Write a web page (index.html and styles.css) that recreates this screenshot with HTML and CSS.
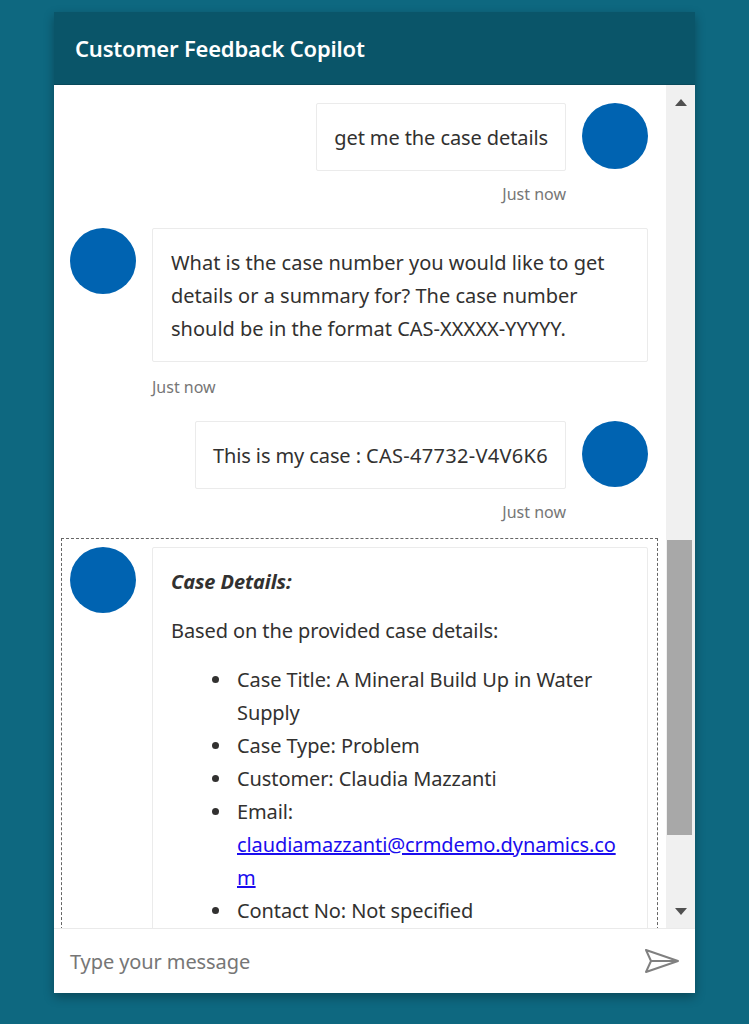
FILE: index.html
```html
<!DOCTYPE html>
<html lang="en">
<head>
    <meta charset="UTF-8">
    <title>Customer Feedback Copilot</title>
    <link rel="stylesheet" href="styles.css">
</head>
<body>
<div class="chat">
    <div class="chat-header">Customer Feedback Copilot</div>
    <div class="chat-body">
        <div class="messages">
            <div class="msg msg-user">
                <div class="msg-main">
                    <div class="bubble">get me the case details</div>
                    <div class="time">Just now</div>
                </div>
                <div class="avatar"></div>
            </div>
            <div class="msg">
                <div class="avatar"></div>
                <div class="msg-main">
                    <div class="bubble bubble-long">What is the case number you would like to get details or a summary for? The case number should be in the format CAS-XXXXX-YYYYY.</div>
                    <div class="time">Just now</div>
                </div>
            </div>
            <div class="msg msg-user">
                <div class="msg-main">
                    <div class="bubble">This is my case : <span class="case-no">CAS-47732-V4V6K6</span></div>
                    <div class="time">Just now</div>
                </div>
                <div class="avatar"></div>
            </div>
            <div class="msg msg-focus">
                <div class="avatar"></div>
                <div class="msg-main">
                    <div class="bubble">
                        <p class="case-title"><b><i>Case Details:</i></b></p>
                        <p>Based on the provided case details:</p>
                        <ul>
                            <li>Case Title: A Mineral Build Up in Water Supply</li>
                            <li>Case Type: Problem</li>
                            <li>Customer: Claudia Mazzanti</li>
                            <li>Email: <a href="#">claudiamazzanti@crmdemo.dynamics.com</a></li>
                            <li>Contact No: Not specified</li>
                        </ul>
                    </div>
                </div>
            </div>
        </div>
        <div class="scrollbar">
            <div class="arrow arrow-up"></div>
            <div class="track"><div class="thumb"></div></div>
            <div class="arrow arrow-down"></div>
        </div>
    </div>
    <div class="chat-input">
        <span class="placeholder">Type your message</span>
        <svg class="send" width="36" height="26" viewBox="0 0 36 26">
            <path d="M2 2 L34 13 L2 24 L7 13 Z M7 13 L34 13" fill="none" stroke="#808080" stroke-width="2" stroke-linejoin="round"/>
        </svg>
    </div>
</div>
</body>
</html>
```

FILE: styles.css
```css
*{
    box-sizing: border-box;
}
body{
    margin: 0;
    height: 1024px;
    padding: 12px 54px 31px;
    background: #0e6880;
    font-family: "Noto Sans", "Open Sans", sans-serif;
    color: #323130;
    overflow: hidden;
}
.chat{
    height: 981px;
    display: flex;
    flex-direction: column;
    background: #fff;
    box-shadow: 0 4px 10px rgba(0,0,0,.3);
}
.chat-header{
    height: 73px;
    flex: none;
    display: flex;
    align-items: center;
    padding-left: 21px;
    background: #0a5569;
    color: #fff;
    font-size: 22px;
    font-weight: 600;
    letter-spacing: -.2px;
    border-bottom: 1px solid #08495b;
}
.chat-body{
    flex: 1;
    min-height: 0;
    display: flex;
}
.messages{
    flex: 1;
    min-width: 0;
    overflow: hidden;
    padding: 10px 9px 0 8px;
}
.msg{
    display: flex;
    gap: 16px;
    padding: 8px 9px 8px 8px;
}
.msg-user{
    justify-content: flex-end;
}
.msg-main{
    min-width: 0;
    flex: 1;
}
.msg-user .msg-main{
    flex: none;
    display: flex;
    flex-direction: column;
    align-items: flex-end;
}
.avatar{
    width: 66px;
    height: 66px;
    flex: none;
    border-radius: 50%;
    background: #0063b1;
}
.bubble{
    padding: 16.5px 18px;
    border: 1px solid #ebebeb;
    border-radius: 2px;
    font-size: 20px;
    line-height: 33px;
    letter-spacing: -.1px;
}
.bubble-long{
    letter-spacing: 0;
}
.msg-user .bubble{
    padding-left: 17px;
    padding-right: 17px;
}
.case-no{
    letter-spacing: .3px;
}
.time{
    margin-top: 15px;
    margin-bottom: 8px;
    height: 20px;
    font-size: 16px;
    line-height: 20px;
    color: #767676;
}
.msg-user .time{
    margin-top: 13px;
}
.msg-focus{
    margin-top: 1px;
    outline: 1px dashed #666;
    padding-bottom: 0;
}
.bubble p{
    margin: 0 0 16px;
}
.bubble ul{
    margin: 0;
    padding-left: 66px;
    list-style: none;
}
.bubble li{
    position: relative;
}
.bubble li::before{
    content: "";
    position: absolute;
    left: -25.5px;
    top: 13px;
    width: 7px;
    height: 7px;
    border-radius: 50%;
    background: #323130;
}
.bubble a{
    color: #1a0dee;
    overflow-wrap: anywhere;
}
.scrollbar{
    width: 29px;
    flex: none;
    display: flex;
    flex-direction: column;
    background: #f0f0f0;
}
.arrow{
    height: 34px;
    flex: none;
    display: flex;
    align-items: center;
    justify-content: center;
}
.arrow::before{
    content: "";
    border-left: 6px solid transparent;
    border-right: 6px solid transparent;
}
.arrow-up::before{
    border-bottom: 7px solid #505050;
}
.arrow-down::before{
    border-top: 7px solid #505050;
}
.track{
    flex: 1;
    padding-top: 421px;
}
.thumb{
    width: 25px;
    height: 295px;
    margin-left: 1px;
    background: #a8a8a8;
}
.chat-input{
    height: 65px;
    flex: none;
    display: flex;
    align-items: center;
    justify-content: space-between;
    padding: 0 15px 0 16px;
    border-top: 1px solid #eaeaea;
}
.placeholder{
    font-size: 20px;
    letter-spacing: -.1px;
    color: #767676;
}
```
